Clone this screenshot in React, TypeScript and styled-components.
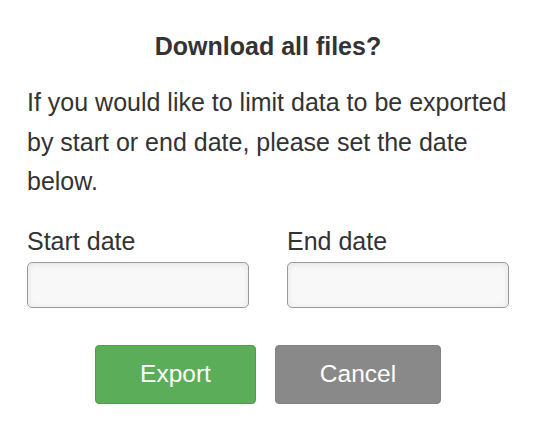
import React from "react";
import styled, { createGlobalStyle } from "styled-components";

const GlobalStyle = createGlobalStyle`
  html, body {
    margin: 0;
    padding: 0;
    background: #ffffff;
  }
  body {
    font-family: "Liberation Sans", Arial, sans-serif;
    color: #333333;
  }
`;

const Dialog = styled.div`
  width: 536px;
  height: 430px;
  box-sizing: border-box;
  padding: 31px 27px 0 27px;
  display: flex;
  flex-direction: column;
`;

const Title = styled.h2`
  margin: 0;
  font-size: 25px;
  font-weight: bold;
  text-align: center;
  line-height: 30px;
`;

const Message = styled.p`
  margin: 22px 0 0 0;
  font-size: 25px;
  line-height: 39.5px;
`;

const Fields = styled.div`
  display: grid;
  grid-template-columns: 222px 222px;
  column-gap: 38px;
  margin-top: 25px;
`;

const Field = styled.label`
  display: flex;
  flex-direction: column;
  gap: 7px;
  font-size: 25px;
  line-height: 28px;
`;

const DateInput = styled.input`
  box-sizing: border-box;
  width: 222px;
  height: 46px;
  border: 1px solid #9a9a9a;
  border-radius: 5px;
  background: #f8f8f8;
  box-shadow: inset 0 1px 6px rgba(0, 0, 0, 0.09);
  outline: none;
  font-family: inherit;
  font-size: 20px;
  padding: 0 10px;
`;

const Actions = styled.div`
  display: flex;
  justify-content: center;
  gap: 19px;
  margin-top: 37px;
`;

const Button = styled.button<{ $tone: "primary" | "neutral"; $width: number }>`
  box-sizing: border-box;
  width: ${(p) => p.$width}px;
  height: 59px;
  border-radius: 4px;
  border: 1px solid ${(p) => (p.$tone === "primary" ? "#4f9c4c" : "#828282")};
  background: ${(p) => (p.$tone === "primary" ? "#5cad59" : "#898989")};
  color: #ffffff;
  font-family: "Liberation Sans", Arial, sans-serif;
  font-size: 24.5px;
  cursor: pointer;
`;

export default function App() {
  return (
    <>
      <GlobalStyle />
      <Dialog>
        <Title>Download all files?</Title>
        <Message>
          If you would like to limit data to be exported by start or end date, please set the date
          below.
        </Message>
        <Fields>
          <Field>
            Start date
            <DateInput type="text" />
          </Field>
          <Field>
            End date
            <DateInput type="text" />
          </Field>
        </Fields>
        <Actions>
          <Button $tone="primary" $width={161}>Export</Button>
          <Button $tone="neutral" $width={166}>Cancel</Button>
        </Actions>
      </Dialog>
    </>
  );
}
